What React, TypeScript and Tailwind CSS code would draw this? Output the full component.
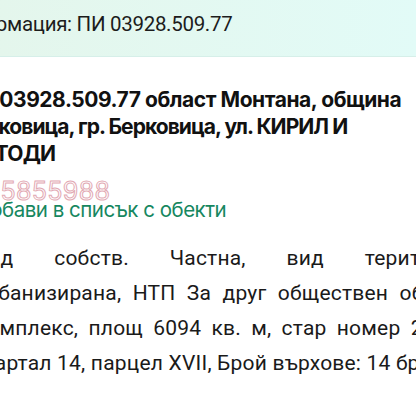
import React from "react";

export default function App() {
  const roboto = { fontFamily: "Roboto, 'Noto Sans', sans-serif" };
  const inter = { fontFamily: "Inter, 'Noto Sans', sans-serif" };
  return (
    <div className="w-[416px] h-[400px] overflow-hidden bg-white relative">
      <div
        className="h-[57px] border-b border-[#d6efe9] bg-gradient-to-r from-[#e4f6ec] to-[#e2fbf7] flex items-start pt-[10px] overflow-hidden whitespace-nowrap"
        style={roboto}
      >
        <span className="text-[20.5px] leading-[28px] tracking-[-0.3px] text-[#1c1c1c] -ml-[56px]">
          Информация: ПИ 03928.509.77
        </span>
      </div>

      <div
        className="mt-[29px] text-[21px] leading-[27px] tracking-[-0.45px] font-bold text-[#111] whitespace-nowrap"
        style={inter}
      >
        <div className="-ml-[36px]">ПИ 03928.509.77 област Монтана, община</div>
        <div className="-ml-[38px] tracking-[-0.95px]">Берковица, гр. Берковица, ул. КИРИЛ И</div>
        <div className="-ml-[36px] tracking-[-0.8px]">МЕТОДИ</div>
      </div>

      <div className="mt-[14px] whitespace-nowrap" style={inter}>
        <div className="-ml-[47px] text-[25px] leading-[20px] tracking-[0.3px] text-transparent [-webkit-text-stroke:1px_#e2a9b3]">
          0885855988
        </div>
        <div className="-ml-[26px] text-[20.5px] leading-[18px] tracking-[-0.5px] text-[#16875f]">
          Добави в списък с обекти
        </div>
      </div>

      <div
        className="mt-[22px] -ml-[24px] w-[482px] text-[21px] leading-[35px] tracking-[0.2px] text-[#1a1a1a]"
        style={roboto}
      >
        <div className="-mr-[10px] text-justify [text-align-last:justify]">
          вид собств. Частна, вид територия
        </div>
        <div className="-mr-[3px] text-justify [text-align-last:justify]">
          урбанизирана, НТП За друг обществен обект,
        </div>
        <div className="-mr-[5px] text-justify [text-align-last:justify]">
          комплекс, площ 6094 кв. м, стар номер 2010,
        </div>
        <div className="-ml-[5px] whitespace-nowrap">квартал 14, парцел XVII, Брой върхове: 14 бр.</div>
      </div>
    </div>
  );
}
